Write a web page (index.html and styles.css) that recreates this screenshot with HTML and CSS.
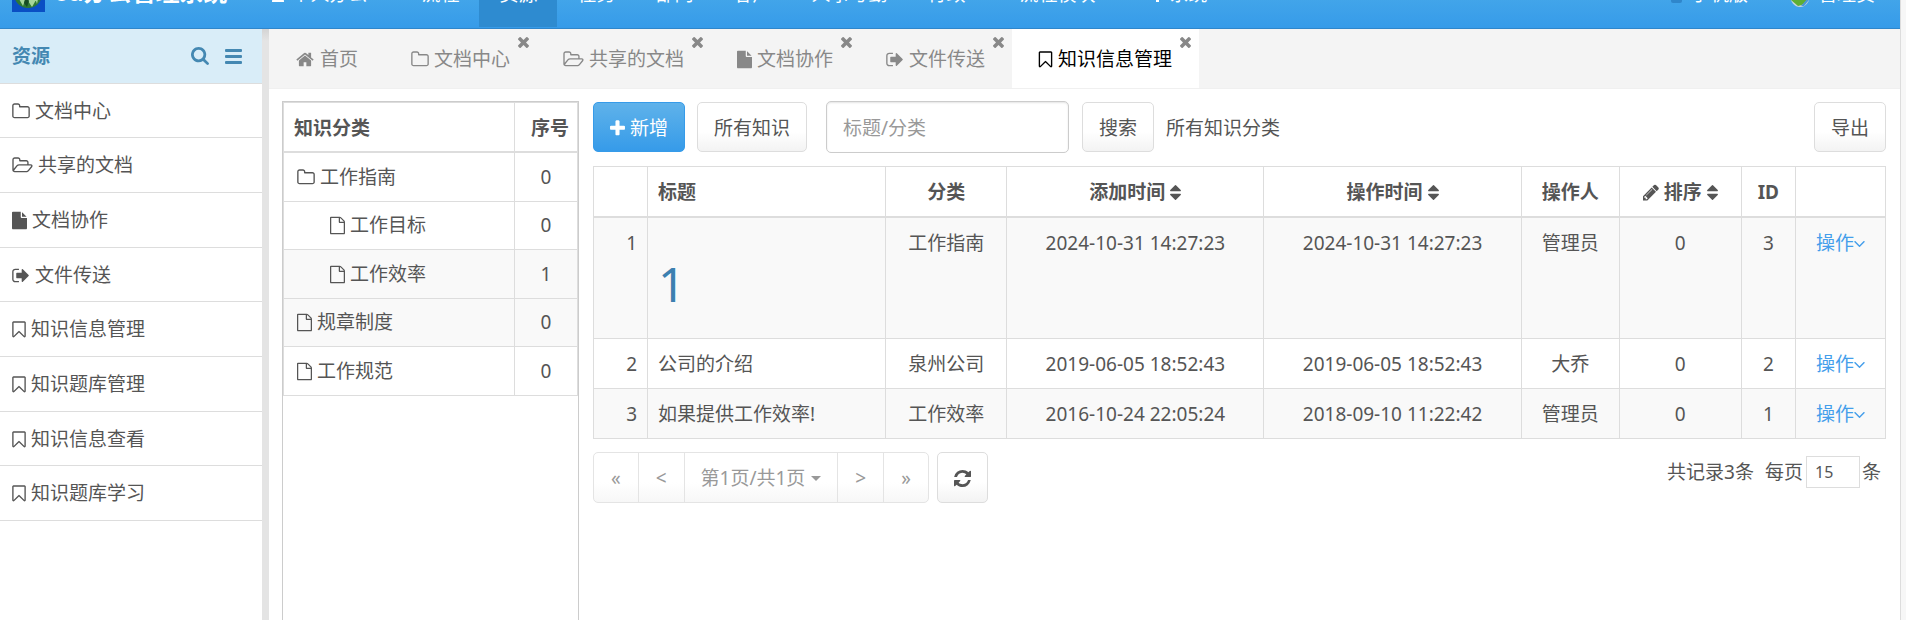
FILE: index.html
```html
<!DOCTYPE html>
<html lang="zh-CN">
<head>
<meta charset="utf-8">
<title>知识信息管理</title>
<link rel="stylesheet" href="styles.css">
</head>
<body>
<svg class="sprite" aria-hidden="true">
  <symbol id="folder" viewBox="64 0 1664 1792"><path d="M1600 1312v-704q0-40-28-68t-68-28h-704q-40 0-68-28t-28-68v-64q0-40-28-68t-68-28h-320q-40 0-68 28t-28 68v960q0 40 28 68t68 28h1216q40 0 68-28t28-68zm128-704v704q0 92-66 158t-158 66h-1216q-92 0-158-66t-66-158v-960q0-92 66-158t158-66h320q92 0 158 66t66 158v32h672q92 0 158 66t66 158z"/></symbol>
  <symbol id="folder-open" viewBox="64 0 1920 1792"><path d="M1845 931q0-35-53-35h-1088q-40 0-85.500 21.500t-71.500 52.500l-294 363q-18 24-18 40 0 35 53 35h1088q40 0 86-22t71-53l294-363q18-22 18-39zm-1141-163h768v-160q0-40-28-68t-68-28h-576q-40 0-68-28t-28-68v-64q0-40-28-68t-68-28h-320q-40 0-68 28t-28 68v853l256-315q44-53 116-87.500t140-34.500zm1269 163q0 62-46 120l-295 363q-43 53-116 87.500t-140 34.500h-1088q-92 0-158-66t-66-158v-960q0-92 66-158t158-66h320q92 0 158 66t66 158v32h544q92 0 158 66t66 158v160h192q54 0 99 24.500t67 70.500q15 32 15 68z"/></symbol>
  <symbol id="file" viewBox="128 0 1536 1792"><path d="M1152 512v-472q22 14 36 28l408 408q14 14 28 36h-472zm-128 32q0 40 28 68t68 28h544v1056q0 40-28 68t-68 28h-1344q-40 0-68-28t-28-68v-1600q0-40 28-68t68-28h800v544z"/></symbol>
  <symbol id="file-o" viewBox="128 0 1536 1792"><path d="M1596 380q28 28 48 76t20 88v1152q0 40-28 68t-68 28h-1344q-40 0-68-28t-28-68v-1600q0-40 28-68t68-28h896q40 0 88 20t76 48zm-444-244v376h376q-10-29-22-41l-313-313q-12-12-41-22zm384 1528v-1024h-416q-40 0-68-28t-28-68v-416h-768v1536h1280z"/></symbol>
  <symbol id="signout" viewBox="64 0 1664 1792"><path d="M704 1440q0 4 1 20t.5 26.500-3 23.500-10 19.500-20.500 6.500h-320q-119 0-203.500-84.500t-84.500-203.500v-704q0-119 84.500-203.500t203.500-84.500h320q13 0 22.500 9.500t9.500 22.500q0 4 1 20t.5 26.500-3 23.500-10 19.500-20.500 6.500h-320q-66 0-113 47t-47 113v704q0 66 47 113t113 47h312l11.500 1 11.500 3 8 5.500 7 9 2 13.500zm928-544q0 26-19 45l-544 544q-19 19-45 19t-45-19-19-45v-288h-448q-26 0-45-19t-19-45v-384q0-26 19-45t45-19h448v-288q0-26 19-45t45-19 45 19l544 544q19 19 19 45z"/></symbol>
  <symbol id="bookmark" viewBox="256 0 1280 1792"><path d="M1408 256h-1024v1242l423-406 89-85 89 85 423 406v-1242zm12-128q23 0 44 9 33 13 52.500 41t19.500 62v1289q0 34-19.500 62t-52.500 41q-19 8-44 8-48 0-83-32l-441-424-441 424q-36 33-83 33-23 0-44-9-33-13-52.500-41t-19.500-62v-1289q0-34 19.500-62t52.500-41q21-9 44-9h1048z"/></symbol>
  <symbol id="home" viewBox="64 0 1664 1792"><path d="M1472 992v480q0 26-19 45t-45 19h-384v-384h-256v384h-384q-26 0-45-19t-19-45v-480q0-1 .5-3t.5-3l575-474 575 474q1 2 1 6zm223-69l-62 74q-8 9-21 11h-3q-13 0-21-7l-692-577-692 577q-12 8-24 7-13-2-21-11l-62-74q-8-10-7-23.500t11-21.500l719-599q32-26 76-26t76 26l244 204v-195q0-14 9-23t23-9h192q14 0 23 9t9 23v408l219 182q10 8 11 21.500t-7 23.500z"/></symbol>
  <symbol id="search" viewBox="64 128 1664 1664"><path d="M1216 832q0-185-131.500-316.500t-316.500-131.500-316.500 131.500-131.500 316.500 131.500 316.500 316.500 131.500 316.500-131.500 131.500-316.500zm512 832q0 52-38 90t-90 38q-54 0-90-38l-343-342q-179 124-399 124-143 0-273.500-55.500t-225-150-150-225-55.500-273.500 55.500-273.500 150-225 225-150 273.500-55.500 273.500 55.500 225 150 150 225 55.500 273.500q0 220-124 399l343 343q37 37 37 90z"/></symbol>
  <symbol id="bars" viewBox="0 0 17 17"><path d="M1 1h15q1 0 1 1v1q0 1-1 1H1Q0 4 0 3V2q0-1 1-1zm0 6h15q1 0 1 1v1q0 1-1 1H1q-1 0-1-1V8q0-1 1-1zm0 6h15q1 0 1 1v1q0 1-1 1H1q-1 0-1-1v-1q0-1 1-1z"/></symbol>
  <symbol id="plus" viewBox="192 0 1408 1792"><path d="M1600 736v192q0 40-28 68t-68 28h-416v416q0 40-28 68t-68 28h-192q-40 0-68-28t-28-68v-416h-416q-40 0-68-28t-28-68v-192q0-40 28-68t68-28h416v-416q0-40 28-68t68-28h192q40 0 68 28t28 68v416h416q40 0 68 28t28 68z"/></symbol>
  <symbol id="times" viewBox="302 366 1188 1188"><path d="M1490 1322q0 40-28 68l-136 136q-28 28-68 28t-68-28l-294-294-294 294q-28 28-68 28t-68-28l-136-136q-28-28-28-68t28-68l294-294-294-294q-28-28-28-68t28-68l136-136q28-28 68-28t68 28l294 294 294-294q28-28 68-28t68 28l136 136q28 28 28 68t-28 68l-294 294 294 294q28 28 28 68z"/></symbol>
  <symbol id="sort" viewBox="384 0 1024 1792"><path d="M1408 1088q0 26-19 45l-448 448q-19 19-45 19t-45-19l-448-448q-19-19-19-45t19-45 45-19h896q26 0 45 19t19 45zm0-384q0 26-19 45t-45 19h-896q-26 0-45-19t-19-45 19-45l448-448q19-19 45-19t45 19l448 448q19 19 19 45z"/></symbol>
  <symbol id="pencil" viewBox="128 0 1536 1792"><path d="M491 1536l91-91-235-235-91 91v107h128v128h107zm523-928q0-22-22-22-10 0-17 7l-542 542q-7 7-7 17 0 22 22 22 10 0 17-7l542-542q7-7 7-17zm-54-192l416 416-832 832h-416v-416zm683 96q0 53-37 90l-166 166-416-416 166-165q36-38 90-38 53 0 91 38l235 234q37 39 37 91z"/></symbol>
  <symbol id="refresh" viewBox="128 128 1536 1536"><path d="M1639 1056q0 5-1 7-64 268-268 434.500t-478 166.500q-146 0-282.500-55t-243.500-157l-129 129q-19 19-45 19t-45-19-19-45v-448q0-26 19-45t45-19h448q26 0 45 19t19 45-19 45l-137 137q71 66 161 102t187 36q134 0 250-65t186-179q11-17 53-117 8-23 30-23h192q13 0 22.500 9.500t9.500 22.500zm25-800v448q0 26-19 45t-45 19h-448q-26 0-45-19t-19-45 19-45l138-138q-148-137-349-137-134 0-250 65t-186 179q-11 17-53 117-8 23-30 23h-199q-13 0-22.500-9.500t-9.500-22.500v-7q65-268 270-434.500t480-166.500q146 0 284 55.500t245 156.500l130-129q19-19 45-19t45 19 19 45z"/></symbol>
  <symbol id="angle" viewBox="384 0 1024 1792"><path d="M1395 736q0 13-10 23l-466 466q-10 10-23 10t-23-10l-466-466q-10-10-10-23t10-23l50-50q10-10 23-10t23 10l393 393 393-393q10-10 23-10t23 10l50 50q10 10 10 23z"/></symbol>
  <symbol id="user" viewBox="0 0 15 19"><circle cx="7" cy="6" r="4"/><path d="M1 17q0-6 6-6t6 6z"/></symbol>
  <symbol id="gear" viewBox="0 0 15 19"><path fill-rule="evenodd" d="M6 3h3v2l2 1 2-1 1 3-2 1v2l2 1-1 3-2-1-2 1v2H6v-2l-2-1-2 1-1-3 2-1V9L1 8l1-3 2 1 2-1zm1 5a2 2 0 1 0 1 4 2 2 0 0 0-1-4z"/></symbol>
  <symbol id="phone" viewBox="0 0 13 19"><rect x="1" y="1" width="11" height="17" rx="2"/></symbol>
</svg>

<div class="page">
  <header class="topbar">
    <svg class="logo" viewBox="0 0 33 40" role="img" aria-label="标志">
      <rect width="33" height="40" fill="#0a4fc4"/>
      <circle cx="16" cy="22" r="14" fill="#2f7a35"/>
      <path d="M10 18l3 10-2 6-4-7zM20 20l4 8-4 7-4-6zM27 22l-2 10-2-6z" fill="#a6d69a"/>
      <path d="M14 24l3 5-2 6-3-4z" fill="#164d25"/>
    </svg>
    <strong class="brand">oa办公管理系统</strong>
    <nav class="nav">
      <a class="nav-item nav-group" href="#"><svg class="ico w15"><use href="#user"/></svg>个人办公</a>
      <a class="nav-item" href="#">流程</a>
      <a class="nav-item nav-on" href="#">资源</a>
      <a class="nav-item" href="#">任务</a>
      <a class="nav-item" href="#">部门</a>
      <a class="nav-item" href="#">客户</a>
      <a class="nav-item" href="#">人事考勤</a>
      <a class="nav-item nav-group" href="#">行政</a>
      <a class="nav-item nav-group" href="#">流程模块</a>
      <a class="nav-item" href="#"><svg class="ico w15"><use href="#gear"/></svg>系统</a>
    </nav>
    <a class="top-link" href="#"><svg class="ico w13 dim"><use href="#phone"/></svg>手机版</a>
    <a class="top-link" href="#">
      <svg class="avatar" viewBox="0 0 20 24" aria-hidden="true">
        <ellipse cx="10" cy="12" rx="10" ry="12" fill="#c9d6dc"/>
        <path d="M1 17q2-10 14-12l4 8q-3 9-11 10z" fill="#5fae33"/>
        <path d="M11 23l7-8 1 2-5 6z" fill="#4a96d8"/>
      </svg>管理员</a>
  </header>

  <div class="workspace">
    <aside class="sidebar">
      <div class="side-head">
        <h2 class="side-title">资源</h2>
        <button class="icon-btn" type="button" aria-label="搜索菜单"><svg class="ico18"><use href="#search"/></svg></button>
        <button class="icon-btn" type="button" aria-label="折叠菜单"><svg class="ico17"><use href="#bars"/></svg></button>
      </div>
      <nav class="menu">
        <a class="menu-item" href="#"><svg class="ico w18"><use href="#folder"/></svg>文档中心</a>
        <a class="menu-item" href="#"><svg class="ico w21"><use href="#folder-open"/></svg>共享的文档</a>
        <a class="menu-item" href="#"><svg class="ico w15"><use href="#file"/></svg>文档协作</a>
        <a class="menu-item" href="#"><svg class="ico w18"><use href="#signout"/></svg>文件传送</a>
        <a class="menu-item" href="#"><svg class="ico w14"><use href="#bookmark"/></svg>知识信息管理</a>
        <a class="menu-item" href="#"><svg class="ico w14"><use href="#bookmark"/></svg>知识题库管理</a>
        <a class="menu-item" href="#"><svg class="ico w14"><use href="#bookmark"/></svg>知识信息查看</a>
        <a class="menu-item" href="#"><svg class="ico w14"><use href="#bookmark"/></svg>知识题库学习</a>
      </nav>
    </aside>
    <div class="splitter"></div>

    <main class="main">
      <nav class="tabs">
        <div class="tab"><a class="tab-link" href="#"><svg class="ico w20"><use href="#home"/></svg>首页</a></div>
        <div class="tab"><a class="tab-link" href="#"><svg class="ico w18"><use href="#folder"/></svg>文档中心</a><button class="close" type="button" aria-label="关闭"><svg class="ico11"><use href="#times"/></svg></button></div>
        <div class="tab"><a class="tab-link" href="#"><svg class="ico w21"><use href="#folder-open"/></svg>共享的文档</a><button class="close" type="button" aria-label="关闭"><svg class="ico11"><use href="#times"/></svg></button></div>
        <div class="tab"><a class="tab-link" href="#"><svg class="ico w15"><use href="#file"/></svg>文档协作</a><button class="close" type="button" aria-label="关闭"><svg class="ico11"><use href="#times"/></svg></button></div>
        <div class="tab"><a class="tab-link" href="#"><svg class="ico w18"><use href="#signout"/></svg>文件传送</a><button class="close" type="button" aria-label="关闭"><svg class="ico11"><use href="#times"/></svg></button></div>
        <div class="tab tab-on"><a class="tab-link" href="#"><svg class="ico w15"><use href="#bookmark"/></svg>知识信息管理</a><button class="close" type="button" aria-label="关闭"><svg class="ico11"><use href="#times"/></svg></button></div>
      </nav>

      <div class="content">
        <section class="tree">
          <table class="grid tree-grid">
            <colgroup><col><col class="c-seq"></colgroup>
            <thead><tr><th class="left">知识分类</th><th class="seq">序号</th></tr></thead>
            <tbody>
              <tr><td class="left"><span class="node"><svg class="ico w18"><use href="#folder"/></svg>工作指南</span></td><td>0</td></tr>
              <tr><td class="left"><span class="node child"><svg class="ico w15"><use href="#file-o"/></svg>工作目标</span></td><td>0</td></tr>
              <tr class="shade"><td class="left"><span class="node child"><svg class="ico w15"><use href="#file-o"/></svg>工作效率</span></td><td>1</td></tr>
              <tr class="shade"><td class="left"><span class="node"><svg class="ico w15"><use href="#file-o"/></svg>规章制度</span></td><td>0</td></tr>
              <tr><td class="left"><span class="node"><svg class="ico w15"><use href="#file-o"/></svg>工作规范</span></td><td>0</td></tr>
            </tbody>
          </table>
        </section>

        <section class="list">
          <form class="toolbar">
            <button class="btn btn-primary" type="button"><svg class="ico w15"><use href="#plus"/></svg>新增</button>
            <button class="btn" type="button">所有知识</button>
            <input class="field" type="text" placeholder="标题/分类" aria-label="标题/分类">
            <button class="btn" type="button">搜索</button>
            <span class="scope">所有知识分类</span>
            <button class="btn export" type="button">导出</button>
          </form>

          <table class="grid data-grid">
            <colgroup><col class="c-no"><col class="c-title"><col class="c-type"><col class="c-time"><col class="c-time"><col class="c-user"><col class="c-sort"><col class="c-no"><col class="c-act"></colgroup>
            <thead>
              <tr>
                <th></th><th class="left">标题</th><th>分类</th>
                <th><span class="head">添加时间<svg class="ico w11"><use href="#sort"/></svg></span></th>
                <th><span class="head">操作时间<svg class="ico w11"><use href="#sort"/></svg></span></th>
                <th>操作人</th>
                <th><span class="head"><svg class="ico w16"><use href="#pencil"/></svg>排序<svg class="ico w11"><use href="#sort"/></svg></span></th>
                <th>ID</th><th></th>
              </tr>
            </thead>
            <tbody>
              <tr class="shade"><td class="no">1</td><td class="left"><h1 class="big">1</h1></td><td>工作指南</td><td>2024-10-31 14:27:23</td><td>2024-10-31 14:27:23</td><td>管理员</td><td>0</td><td>3</td><td><a class="act" href="#">操作<svg class="ico w11"><use href="#angle"/></svg></a></td></tr>
              <tr><td class="no">2</td><td class="left">公司的介绍</td><td>泉州公司</td><td>2019-06-05 18:52:43</td><td>2019-06-05 18:52:43</td><td>大乔</td><td>0</td><td>2</td><td><a class="act" href="#">操作<svg class="ico w11"><use href="#angle"/></svg></a></td></tr>
              <tr class="shade"><td class="no">3</td><td class="left">如果提供工作效率!</td><td>工作效率</td><td>2016-10-24 22:05:24</td><td>2018-09-10 11:22:42</td><td>管理员</td><td>0</td><td>1</td><td><a class="act" href="#">操作<svg class="ico w11"><use href="#angle"/></svg></a></td></tr>
            </tbody>
          </table>

          <div class="footer">
            <div class="pager">
              <button class="page-btn" type="button" disabled>«</button>
              <button class="page-btn" type="button" disabled>&lt;</button>
              <button class="page-btn page-now" type="button" disabled>第1页/共1页<span class="caret"></span></button>
              <button class="page-btn" type="button" disabled>&gt;</button>
              <button class="page-btn" type="button" disabled>»</button>
            </div>
            <button class="btn reload" type="button" aria-label="刷新"><svg class="ico17"><use href="#refresh"/></svg></button>
            <div class="summary">
              <span class="total">共记录3条</span>
              <label for="size">每页</label>
              <input class="size" id="size" type="text" value="15">
              <span>条</span>
            </div>
          </div>
        </section>
      </div>
    </main>
  </div>
</div>
</body>
</html>
```

FILE: styles.css
```css
* { box-sizing: border-box; }

body {
  margin: 0;
  height: 100vh;
  overflow: hidden;
  padding-right: 5px;
  background: #f7f7f7;
  color: #555;
  font: 19px/27px "Noto Sans", "Noto Sans CJK SC", sans-serif;
}

a { color: inherit; text-decoration: none; }
button, input { font: inherit; color: inherit; margin: 0; }
svg { fill: currentColor; flex: none; }

.sprite { display: none; }
.ico { height: 19px; }
.w11 { width: 11px; }
.w13 { width: 13px; }
.w14 { width: 14px; }
.w15 { width: 15px; }
.w16 { width: 16px; }
.w18 { width: 18px; }
.w20 { width: 20px; }
.w21 { width: 21px; }
.ico11 { width: 11px; height: 11px; display: block; }
.ico17 { width: 17px; height: 17px; display: block; }
.ico18 { width: 18px; height: 18px; display: block; }

.page {
  height: 100%;
  display: flex;
  flex-direction: column;
  background: #fff;
  border-right: 1px solid #ddd;
}

.topbar {
  flex: none;
  height: 74px;
  margin-top: -45px;
  padding: 0 25px 0 12px;
  display: flex;
  align-items: center;
  color: #fff;
  background: linear-gradient(#54b4eb, #369be9);
  border-bottom: 1px solid #2f86cb;
}
.logo { width: 33px; height: 40px; }
.brand { margin-left: 9px; font-size: 24px; white-space: nowrap; }
.nav { display: flex; align-self: stretch; flex: 1; margin-left: 24px; }
.nav-item {
  display: flex;
  align-items: center;
  gap: 5px;
  padding: 6px 20px 0;
  margin-bottom: 1px;
  white-space: nowrap;
}
.nav-group { padding-right: 34px; }
.nav-on { background: #2e8bd0; }
.top-link { display: flex; align-items: center; gap: 8px; margin-left: 42px; padding-top: 6px; white-space: nowrap; }
.dim { color: #2f86cb; }
.avatar { width: 20px; height: 24px; }

.workspace { flex: 1; display: flex; min-height: 0; }

.sidebar { flex: none; width: 262px; }
.side-head {
  display: flex;
  align-items: center;
  gap: 16px;
  height: 55px;
  padding: 0 20px 0 12px;
  color: #4488b2;
  background: #d9edf8;
  border-bottom: 1px solid #ddd;
}
.side-title { flex: 1; margin: 0; font-size: 19px; line-height: 27px; }
.icon-btn { padding: 0; border: 0; background: none; }
.menu-item {
  display: flex;
  align-items: center;
  gap: 5px;
  padding: 14px 12px 13px;
  border-bottom: 1px solid #ddd;
}
.menu-item:nth-child(3n+1) { padding-bottom: 12px; }
.splitter { flex: none; width: 7px; background: linear-gradient(#d4d4d4, #e4e4e4 12px); }

.main { flex: 1; min-width: 0; display: flex; flex-direction: column; }
.tabs {
  display: flex;
  flex: none;
  height: 60px;
  background: #f4f4f4;
  border-bottom: 1px solid #f0f0f0;
}
.tab { position: relative; display: flex; color: #888; }
.tab-link { display: flex; align-items: center; gap: 5px; padding: 2px 27px 0 26px; white-space: nowrap; }
.tab-on { background: #fff; }
.tab-on .tab-link { color: #000; }
.close { position: absolute; top: 8px; right: 8px; padding: 0; border: 0; background: none; color: #888; }

.content { flex: 1; display: flex; gap: 14px; min-height: 0; padding: 12px 14px 0 13px; }

.tree { flex: none; width: 297px; border: 1px solid #ccc; border-bottom: 0; }

.grid { width: 100%; table-layout: fixed; border-collapse: collapse; }
.grid th, .grid td { padding: 12px 10px 10px; border: 1px solid #ddd; text-align: center; vertical-align: top; white-space: nowrap; }
.grid th { border-bottom-width: 2px; font-weight: 700; }
.grid .left { text-align: left; }
.shade { background: #f9f9f9; }

.tree-grid th { padding-bottom: 9px; }
.tree-grid td { padding-top: 11px; }
.tree-grid tr:nth-child(even) td { padding-top: 10px; }
.tree-grid .seq { padding-right: 6px; padding-left: 14px; }
.c-seq { width: 63px; }
.node { display: flex; align-items: center; gap: 5px; padding-left: 3px; }
.child { padding-left: 36px; }

.list { flex: 1; min-width: 0; }
.toolbar { display: flex; align-items: center; margin-bottom: 13px; }
.scope { padding-top: 2px; }
.btn {
  display: flex;
  align-items: center;
  gap: 5px;
  height: 50px;
  margin: 0 12px 0 0;
  padding: 2px 16px 0;
  border: 1px solid #ddd;
  border-radius: 5px;
  background: linear-gradient(#fff 60%, #f3f3f3);
  white-space: nowrap;
}
.btn-primary { color: #fff; border-color: #369be9; background: linear-gradient(#5fb2ea, #369be9); }
.field {
  width: 243px;
  height: 52px;
  margin: 0 13px 0 7px;
  padding: 2px 16px 0;
  border: 1px solid #ccc;
  border-radius: 5px;
  background: #fff;
  box-shadow: inset 0 1px 2px #e4e4e4;
}
.field::placeholder { color: #999; opacity: 1; }
.export { margin: 0 0 0 auto; }

.c-no { width: 54px; }
.c-title { width: 238px; }
.c-type { width: 121px; }
.c-time { width: 257px; }
.c-user { width: 98px; }
.c-sort { width: 122px; }
.c-act { width: 90px; }
.head { display: flex; align-items: center; justify-content: center; gap: 5px; }
.grid .no { text-align: right; }
.big { margin: 30px 0 20px; font-size: 48px; line-height: 48px; font-weight: 400; color: #3c80b0; }
.act { display: flex; align-items: center; justify-content: center; color: #449eeb; }

.footer { display: flex; align-items: flex-start; margin-top: 13px; }
.pager { display: flex; }
.page-btn {
  display: flex;
  align-items: center;
  gap: 6px;
  height: 51px;
  margin-right: -1px;
  padding: 2px 17px 0;
  border: 1px solid #e4e4e4;
  background: linear-gradient(#fff 60%, #f7f7f7);
  color: #999;
}
.page-now { padding: 2px 16px 0; }
.page-btn:first-child { border-radius: 5px 0 0 5px; }
.page-btn:last-child { border-radius: 0 5px 5px 0; }
.caret { border: 5px solid transparent; border-top-color: currentColor; border-bottom: 0; }
.reload { height: 51px; margin: 0 0 0 9px; }
.summary { display: flex; align-items: center; margin: 4px 5px 0 auto; }
.total { margin-right: 11px; }
.size { width: 54px; height: 32px; margin: 0 2px 0 3px; padding: 0 8px; border: 1px solid #ddd; font-size: 16px; }
```
